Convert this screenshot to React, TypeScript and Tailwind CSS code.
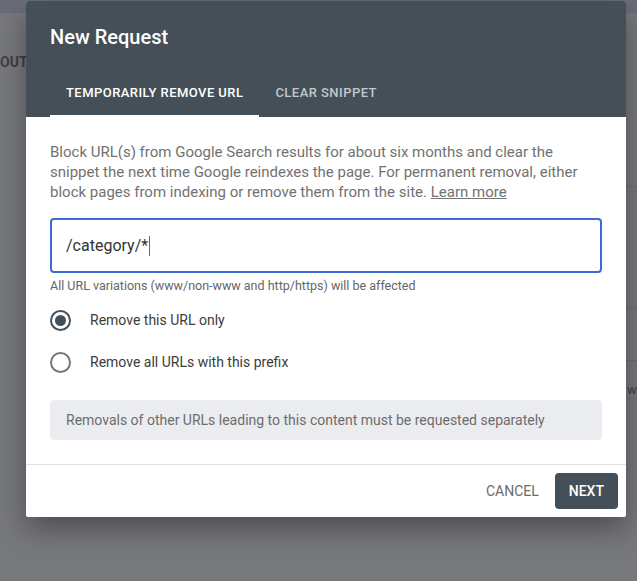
import { useState } from 'react';

function Radio({ checked, label, onClick }: { checked: boolean; label: string; onClick: () => void }) {
  return (
    <button type="button" onClick={onClick} className="flex h-[42px] items-center text-left">
      <span className="flex w-[40px] items-center">
        <span
          className={
            'flex h-[21px] w-[21px] items-center justify-center rounded-full border-2 ' +
            (checked ? 'border-[#434f59]' : 'border-[#767676]')
          }
        >
          {checked && <span className="h-[11px] w-[11px] rounded-full bg-[#434f59]" />}
        </span>
      </span>
      <span className="text-[14px] text-[#3c3c3c]">{label}</span>
    </button>
  );
}

export default function App() {
  const [mode, setMode] = useState<'url' | 'prefix'>('url');
  const [tab, setTab] = useState(0);

  return (
    <div className="relative h-[581px] w-[637px] overflow-hidden bg-[#77787c] font-['Roboto',sans-serif]">
      {/* page underneath the overlay */}
      <div className="absolute inset-x-0 top-0 h-[13px] bg-[#696d79]" />
      <div className="absolute left-0 top-[52px] text-[14px] font-bold text-[#3f3f42]">OUT</div>
      <div className="absolute right-0 top-[186px] h-px w-[12px] bg-[#6c6d70]" />
      <div className="absolute right-0 top-[308px] h-px w-[12px] bg-[#6c6d70]" />
      <div className="absolute right-0 top-[360px] h-px w-[12px] bg-[#6c6d70]" />
      <div className="absolute left-[627px] top-[380px] text-[13px] text-[#3f3f42]">w</div>

      {/* dialog */}
      <div className="relative ml-[26px] mt-[1px] w-[600px] rounded-[2px] bg-white shadow-[0_12px_28px_rgba(0,0,0,0.35)]">
        <div className="rounded-t-[2px] bg-[#444f58] px-[24px] pt-[22px]">
          <h2 className="text-[20px] font-medium leading-[28px] text-white">New Request</h2>
          <div className="mt-[20px] flex">
            <button
              onClick={() => setTab(0)}
              className={
                'h-[46px] border-b-2 px-[16px] text-[13px] font-medium tracking-[0.45px] ' +
                (tab === 0 ? 'border-white text-white' : 'border-transparent text-[#c3c8cc]')
              }
            >
              TEMPORARILY REMOVE URL
            </button>
            <button
              onClick={() => setTab(1)}
              className={
                'h-[46px] border-b-2 px-[16px] text-[13px] font-medium tracking-[0.45px] ' +
                (tab === 1 ? 'border-white text-white' : 'border-transparent text-[#c3c8cc]')
              }
            >
              CLEAR SNIPPET
            </button>
          </div>
        </div>

        <div className="px-[24px] pt-[25px] pb-[24px]">
          <p className="text-[15px] leading-[20px] text-[#727272]">
            Block URL(s) from Google Search results for about six months and clear the snippet the next time Google
            reindexes the page. For permanent removal, either block pages from indexing or remove them from the site.{' '}
            <a className="underline">Learn more</a>
          </p>

          <div className="mt-[16px] flex h-[55px] items-center rounded-[4px] border-2 border-[#3b6ad6] px-[14px]">
            <span className="text-[16px] text-[#333333]">/category/*</span>
            <span className="ml-px h-[20px] w-px bg-[#3b6ad6]" />
          </div>
          <p className="mt-[5px] text-[12.5px] leading-[16px] text-[#666666]">
            All URL variations (www/non-www and http/https) will be affected
          </p>

          <div className="mt-[5px] flex flex-col">
            <Radio checked={mode === 'url'} label="Remove this URL only" onClick={() => setMode('url')} />
            <Radio
              checked={mode === 'prefix'}
              label="Remove all URLs with this prefix"
              onClick={() => setMode('prefix')}
            />
          </div>

          <div className="mt-[17px] flex h-[40px] items-center rounded-[4px] bg-[#ebecef] px-[16px] text-[14px] text-[#6d6d6d]">
            Removals of other URLs leading to this content must be requested separately
          </div>
        </div>

        <div className="flex items-center justify-end gap-[8px] border-t border-[#e0e0e0] px-[8px] py-[8px]">
          <button className="h-[36px] rounded-[4px] px-[8px] text-[14px] text-[#6b6b6b]">CANCEL</button>
          <button className="h-[36px] rounded-[4px] bg-[#434f59] px-[14px] text-[14px] font-medium text-white">
            NEXT
          </button>
        </div>
      </div>
    </div>
  );
}
